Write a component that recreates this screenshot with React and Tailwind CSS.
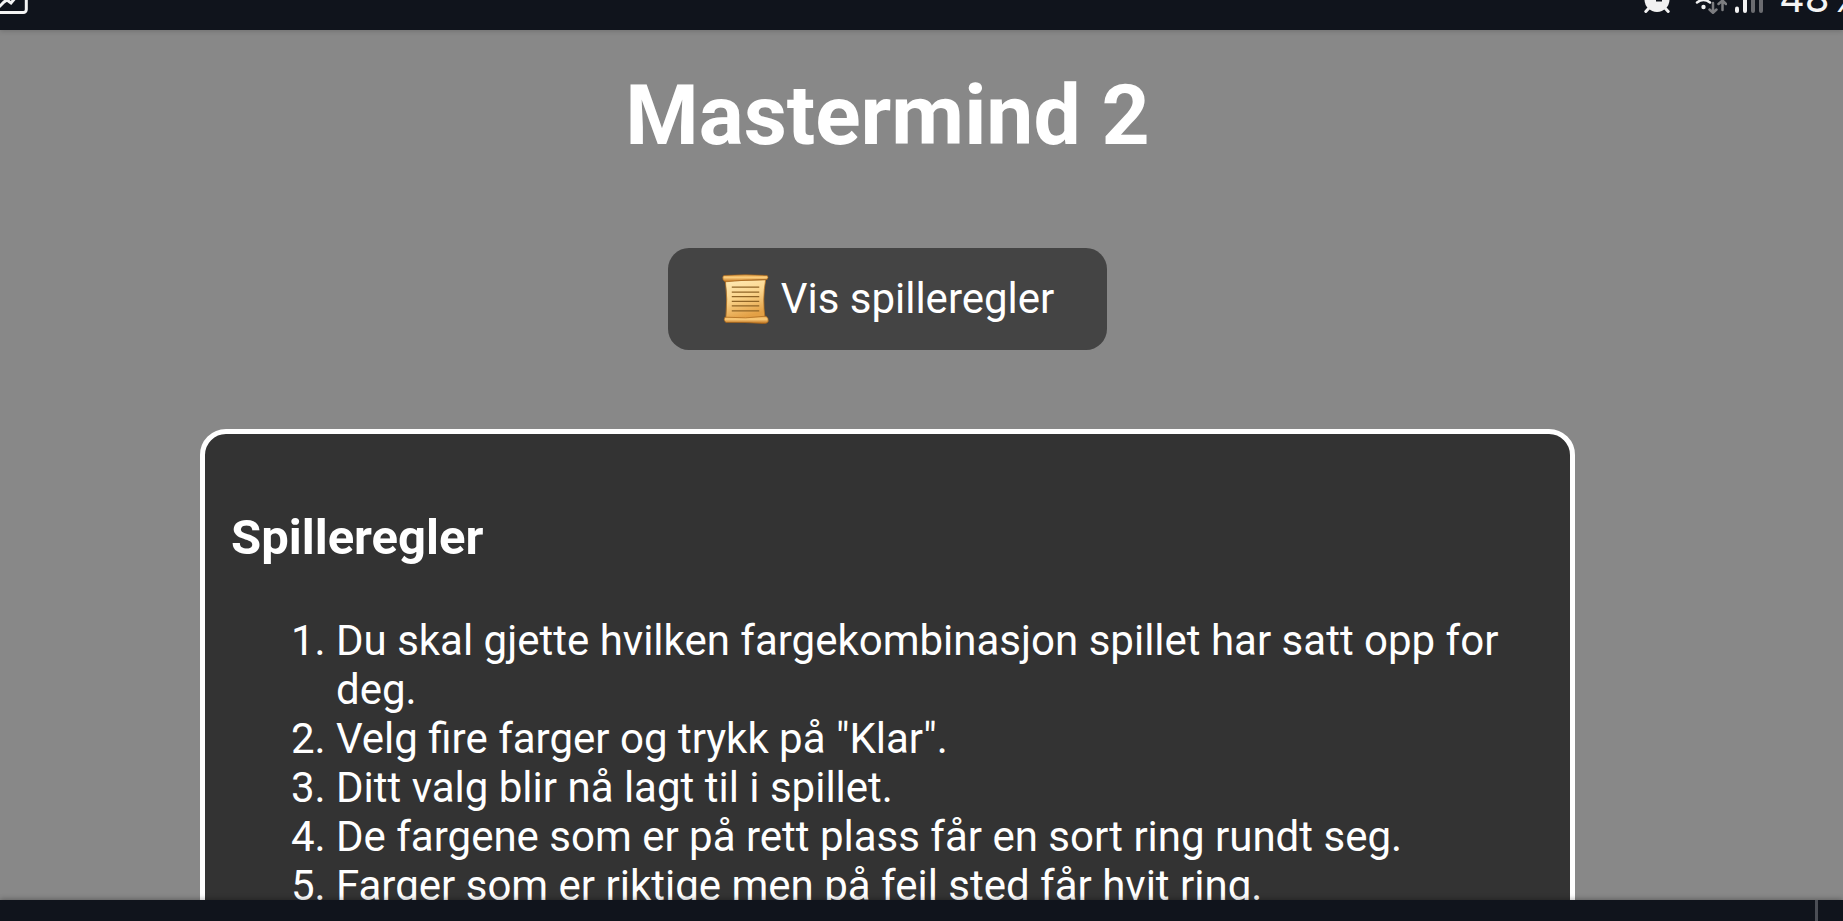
const rules = [
  "Du skal gjette hvilken fargekombinasjon spillet har satt opp for deg.",
  "Velg fire farger og trykk på \"Klar\".",
  "Ditt valg blir nå lagt til i spillet.",
  "De fargene som er på rett plass får en sort ring rundt seg.",
  "Farger som er riktige men på feil sted får hvit ring.",
];

const ImageIcon = () => (
  <svg width="28" height="14" viewBox="0 0 28 14" fill="none" stroke="#f4f4f4" strokeWidth="3" aria-hidden="true">
    <path d="M26.300 -4V9.500a3 3 0 0 1-3 3H-2" />
    <path d="M-2 8L4 2L7 0L11 3L16 -3" strokeWidth="3" />
  </svg>
);

const AlarmIcon = () => (
  <svg width="26" height="13" viewBox="0 0 26 13" aria-hidden="true">
    <circle cx="13" cy="-0.500" r="12.500" fill="#f1f1f1" />
    <path d="M5 8L1.800 11.500M21 8L24.200 11.500" stroke="#f1f1f1" strokeWidth="3" strokeLinecap="round" />
    <path d="M13 -4V0.500H18" stroke="#10141c" strokeWidth="2" fill="none" />
  </svg>
);

const WifiIcon = () => (
  <svg width="32" height="14" viewBox="0 0 32 14" fill="none" strokeLinecap="round" aria-hidden="true">
    <path d="M2 2.500Q8.500 -2.500 15 2.500" stroke="#f1f1f1" strokeWidth="2.500" />
    <circle cx="8.500" cy="7" r="2.200" fill="#f1f1f1" />
    <path d="M18 3V12.500M14.500 9.500L18 12.800L21.500 9.500" stroke="#7c7d80" strokeWidth="2.500" />
    <path d="M27.500 10V0M23.500 4L27.500 0.500L31 4" stroke="#7c7d80" strokeWidth="2.500" />
  </svg>
);

const SignalIcon = () => (
  <svg width="28" height="13" viewBox="0 0 28 13" strokeWidth="4" strokeLinecap="round" aria-hidden="true">
    <path d="M2 8.500V11" stroke="#f1f1f1" />
    <path d="M10 -4V11" stroke="#f1f1f1" />
    <path d="M18 -4V11M26 -4V11" stroke="#6b6c70" />
  </svg>
);

const ScrollIcon = () => (
  <svg width="50" height="50" viewBox="0 0 51 51" aria-hidden="true">
    <defs>
      <linearGradient id="paper" x1="0" y1="0" x2="0.300" y2="1">
        <stop offset="0" stopColor="#ffebb6" />
        <stop offset="0.500" stopColor="#fbd58c" />
        <stop offset="1" stopColor="#e3a045" />
      </linearGradient>
      <linearGradient id="roll" x1="0" y1="0" x2="0" y2="1">
        <stop offset="0" stopColor="#e4a44c" />
        <stop offset="0.400" stopColor="#fccd7c" />
        <stop offset="1" stopColor="#b96b16" />
      </linearGradient>
    </defs>
    <path d="M4.500 7L45.500 6Q42 25 45 46L5 45Q7 25 4.500 7Z" fill="url(#paper)" stroke="#bd7722" strokeWidth="0.800" />
    <path d="M3 1.500Q25 0 47 1.500Q49 3 47 5.500Q25 5.800 4 8Q1 6 2 2.500Z" fill="url(#roll)" stroke="#a6651c" strokeWidth="0.700" />
    <path d="M4 44Q25 46 46 43Q49 45 48 49Q46 51 43 50.500Q24 49 5 49.500Q2 47 4 44Z" fill="url(#roll)" stroke="#a6651c" strokeWidth="0.700" />
    <path d="M11 13.500H39M11 18.500H39M11 23H39M11 28H39M11 32.500H39M11 37.500H39" stroke="#8f6426" strokeWidth="1.300" />
  </svg>
);

const StatusBar = () => (
  <header className="relative z-10 flex h-[30px] shrink-0 items-start justify-between overflow-hidden bg-[#10141c] shadow-[0_1px_5px_rgba(0,0,0,0.18)]">
    <ImageIcon />
    <div className="flex items-start">
      <AlarmIcon />
      <div className="ml-[25px]">
        <WifiIcon />
      </div>
      <div className="ml-2">
        <SignalIcon />
      </div>
      <span className="-mt-[26px] ml-4 w-16 font-[Inter,sans-serif] text-[40px] leading-[48px] text-[#f4f4f4]">48%</span>
    </div>
  </header>
);

const RulesCard = () => (
  <section className="mt-[79px] w-full rounded-[26px] border-[5px] border-white bg-[#333333] p-[26px]">
    <h2 className="my-12 text-[49px] leading-[60px] font-bold">Spilleregler</h2>
    <ol className="list-decimal pl-[105px] text-[42px] leading-[49px]">
      {rules.map((rule) => (
        <li key={rule}>{rule}</li>
      ))}
    </ol>
  </section>
);

export default function App() {
  return (
    <div className="flex h-screen flex-col overflow-hidden bg-[#888888] font-[Roboto,sans-serif] text-white">
      <StatusBar />
      <main className="flex min-h-0 flex-1 flex-col items-center overflow-hidden pt-[37px] pr-[268px] pl-[200px]">
        <h1 className="text-[84px] leading-[98px] font-bold">Mastermind 2</h1>
        <button
          type="button"
          className="mt-[83px] flex items-center gap-[10px] rounded-[21px] bg-[#444444] px-[53px] py-[26px] text-[42px] leading-[50px]"
        >
          <ScrollIcon />
          Vis spilleregler
        </button>
        <RulesCard />
      </main>
      <footer className="relative z-10 flex h-[21px] shrink-0 justify-end bg-[#10141c] pr-[25px] shadow-[0_-1px_5px_rgba(0,0,0,0.3)]">
        <div className="w-[3px] bg-[#4b4e55]" />
      </footer>
    </div>
  );
}
